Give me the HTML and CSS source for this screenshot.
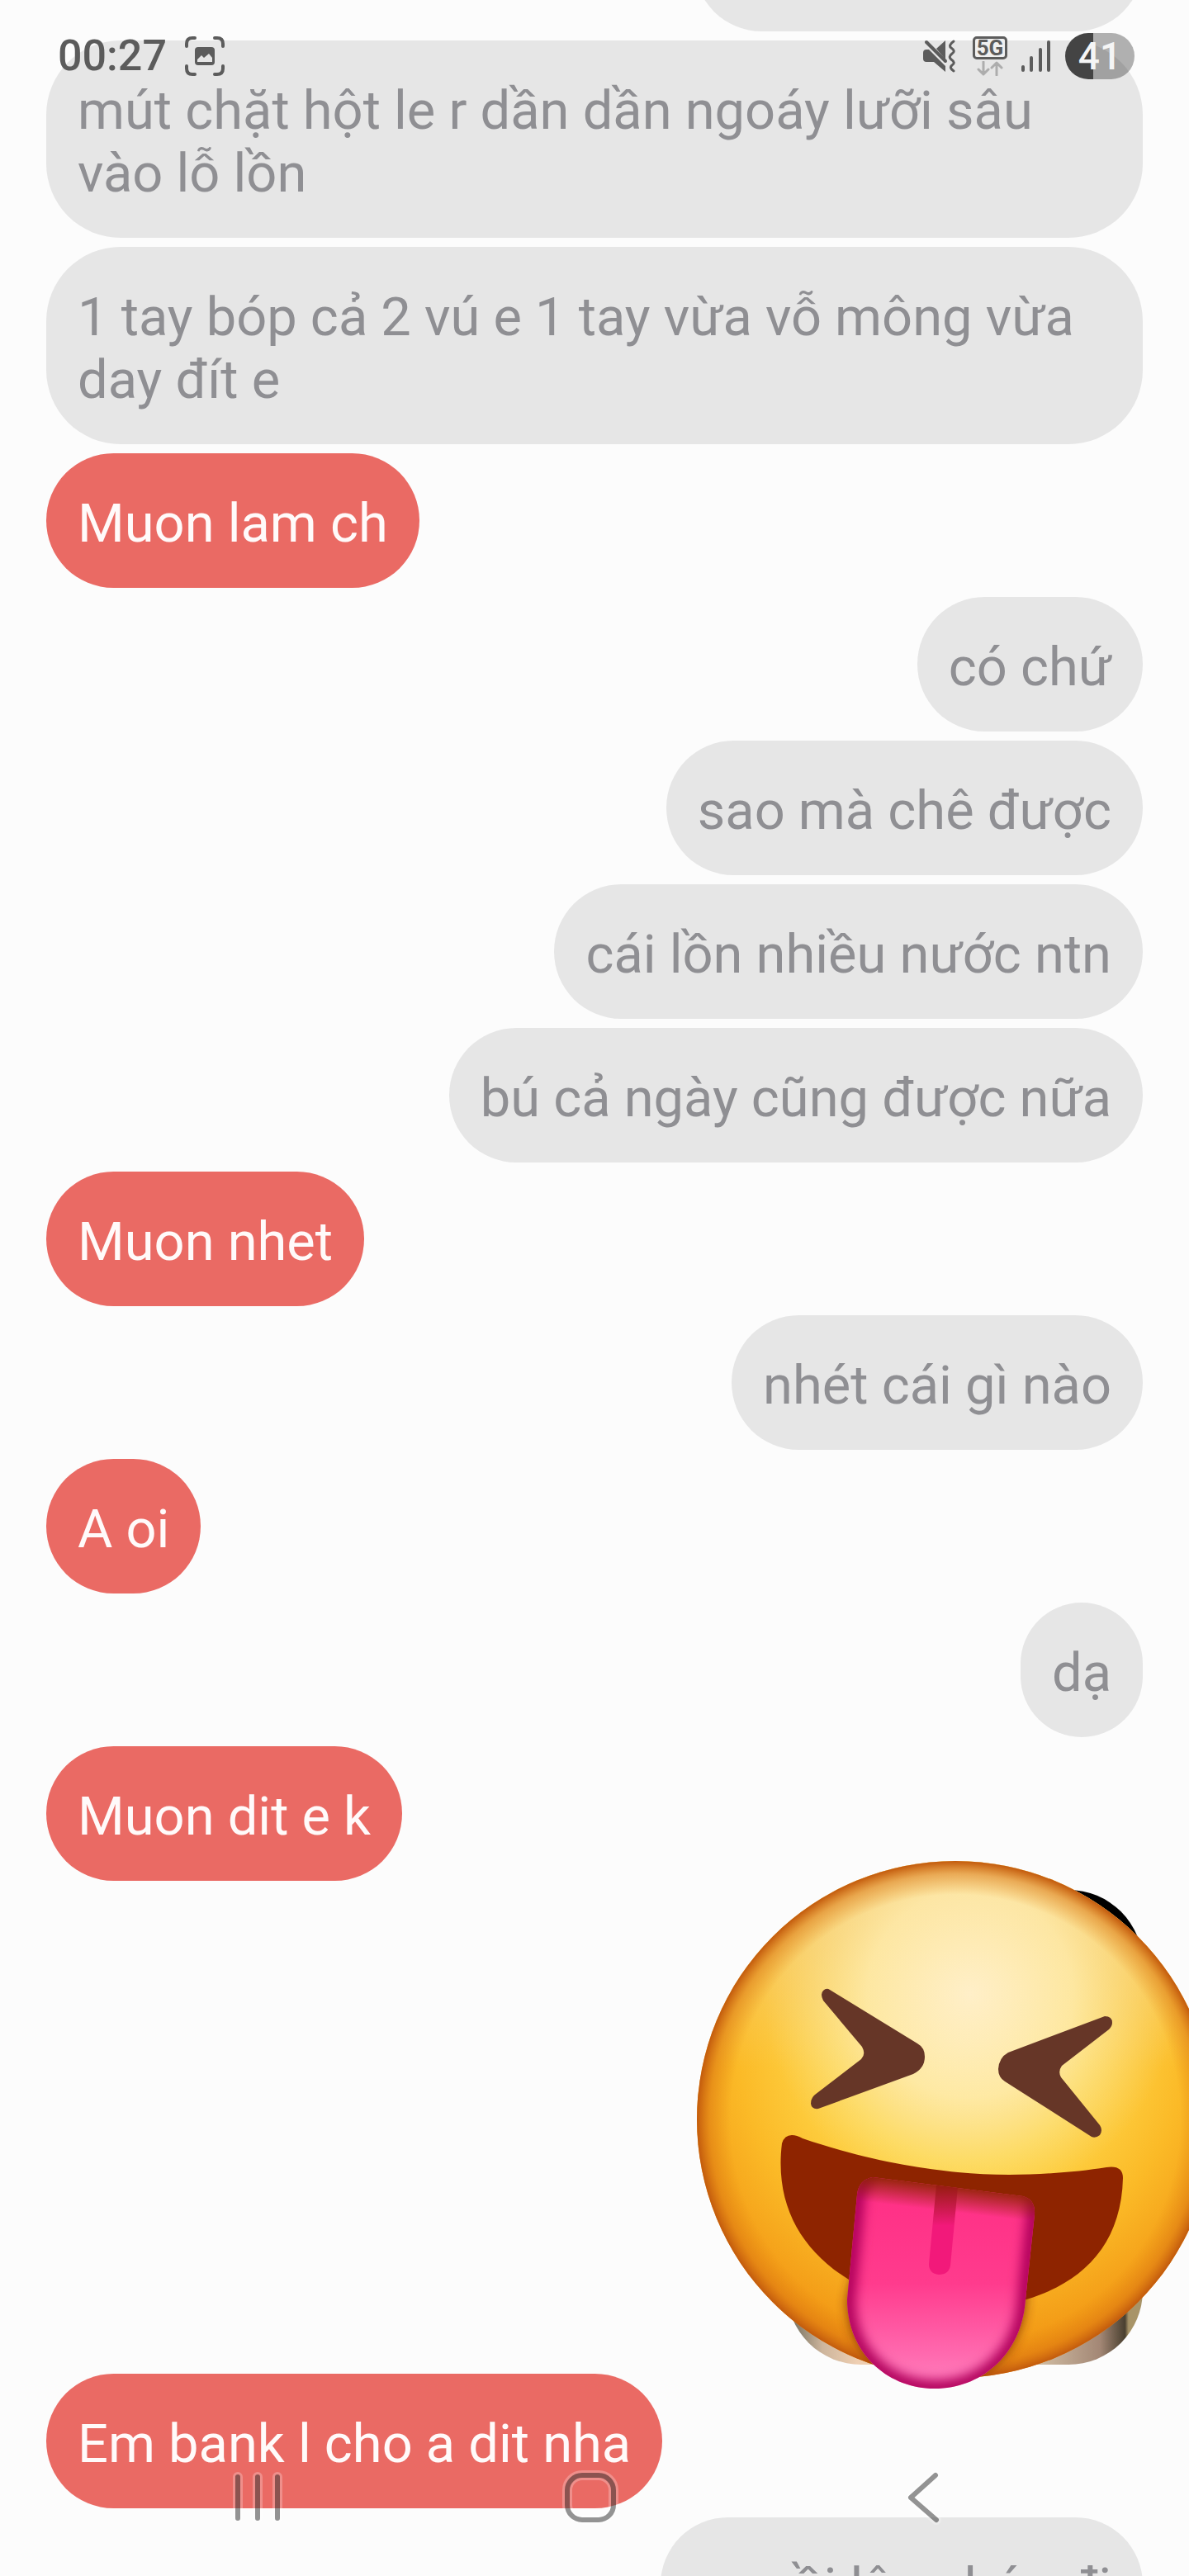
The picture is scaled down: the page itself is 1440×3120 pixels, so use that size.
FILE: index.html
```
<!DOCTYPE html>
<html lang="vi">
<head>
    <meta charset="UTF-8">
    <meta name="viewport" content="width=device-width, initial-scale=1.0">
    <title>Chat</title>
    <link rel="stylesheet" href="styles.css">
</head>
<body>
    <div class="screen">
        <header class="status-bar">
            <span class="clock">00:27</span>
            <svg class="capture-icon" width="48" height="48" viewBox="0 0 48 48" fill="none" stroke="#5c5c5c" stroke-width="4" stroke-linecap="round">
                <path d="M2 12V9Q2 2 9 2H12M36 2H39Q46 2 46 9V12M46 36V39Q46 46 39 46H36M12 46H9Q2 46 2 39V36"/>
                <rect x="12" y="13" width="24" height="22" rx="4" fill="#5c5c5c" stroke="none"/>
                <path d="M15 31V28L20 23L23 26L29 21L33 26V31Z" fill="#e6e6e6" stroke="none"/>
            </svg>
            <div class="status-icons">
                <svg width="40" height="40" viewBox="0 0 40 40" fill="#5c5c5c">
                    <path d="M4 12H7L27 32V39L13 27H4Q0 27 0 23V16Q0 12 4 12Z"/>
                    <path d="M27 1V24L16 11Z"/>
                    <path d="M4 3L27 26" fill="none" stroke="#5c5c5c" stroke-width="4" stroke-linecap="round"/>
                    <path d="M37 2Q30 7 34 10Q40 14 35 17Q30 21 34 24Q40 28 35 31Q31 34 37 38" fill="none" stroke="#5c5c5c" stroke-width="3" stroke-linecap="round"/>
                </svg>
                <div class="network">
                    <span class="network-type">5G</span>
                    <svg width="32" height="18" viewBox="0 0 32 18" fill="none" stroke="#adadad" stroke-width="3" stroke-linecap="round" stroke-linejoin="round">
                        <path d="M8 1V16M2 10L8 16L14 10M24 17V2M18 8L24 2L30 8"/>
                    </svg>
                </div>
                <svg width="38" height="40" viewBox="0 0 38 40" stroke="#5c5c5c" stroke-width="4" stroke-linecap="round">
                    <path d="M3 33V37M13 22V37M24 12V37M34 3V37"/>
                </svg>
                <span class="battery">41</span>
            </div>
        </header>

        <main class="chat">
            <div class="message sent previous"></div>
            <div class="message sent">mút chặt hột le r dần dần ngoáy lưỡi sâu vào lỗ lồn</div>
            <div class="message sent">1 tay bóp cả 2 vú e 1 tay vừa vỗ mông vừa day đít e</div>
            <div class="message received">Muon lam ch</div>
            <div class="message sent">có chứ</div>
            <div class="message sent">sao mà chê được</div>
            <div class="message sent">cái lồn nhiều nước ntn</div>
            <div class="message sent">bú cả ngày cũng được nữa</div>
            <div class="message received">Muon nhet</div>
            <div class="message sent">nhét cái gì nào</div>
            <div class="message received">A oi</div>
            <div class="message sent">dạ</div>
            <div class="message received">Muon dit e k</div>
            <div class="photo">
                <svg class="sticker" width="620" height="700" viewBox="0 0 620 700">
                    <defs>
                        <radialGradient id="skin" gradientUnits="userSpaceOnUse" cx="345" cy="250" r="390">
                            <stop offset="0" stop-color="#ffe994"/>
                            <stop offset=".38" stop-color="#ffda4e"/>
                            <stop offset=".7" stop-color="#fbba27"/>
                            <stop offset="1" stop-color="#f19312"/>
                        </radialGradient>
                        <radialGradient id="shine" gradientUnits="userSpaceOnUse" cx="355" cy="195" r="250">
                            <stop offset="0" stop-color="#ffefc8"/>
                            <stop offset=".5" stop-color="#feebb0" stop-opacity=".8"/>
                            <stop offset="1" stop-color="#f6d78c" stop-opacity="0"/>
                        </radialGradient>
                        <linearGradient id="brow" x1="0" y1="0" x2="0" y2="1">
                            <stop offset="0" stop-color="#f3d08a" stop-opacity=".9"/>
                            <stop offset=".4" stop-color="#f8d680" stop-opacity="0"/>
                        </linearGradient>
                        <radialGradient id="rim" gradientUnits="userSpaceOnUse" cx="337" cy="347" r="313">
                            <stop offset=".87" stop-color="#e08010" stop-opacity="0"/>
                            <stop offset=".95" stop-color="#d97512" stop-opacity=".5"/>
                            <stop offset="1" stop-color="#c25a0d"/>
                        </radialGradient>
                        <linearGradient id="tongue" x1="0" y1="0" x2="0" y2="1">
                            <stop offset="0" stop-color="#ff2d84"/>
                            <stop offset=".5" stop-color="#ff3b8d"/>
                            <stop offset=".9" stop-color="#ff75b7"/>
                        </linearGradient>
                        <linearGradient id="lip" gradientUnits="userSpaceOnUse" x1="328" y1="424" x2="324" y2="458">
                            <stop offset="0" stop-color="#8e2400"/>
                            <stop offset="1" stop-color="#8e2400" stop-opacity="0"/>
                        </linearGradient>
                        <linearGradient id="groove" x1="0" y1="0" x2="0" y2="1">
                            <stop offset="0" stop-color="#961c10"/>
                            <stop offset=".45" stop-color="#f2197a"/>
                        </linearGradient>
                        <filter id="blur" x="-20%" y="-20%" width="140%" height="140%">
                            <feGaussianBlur stdDeviation="7"/>
                        </filter>
                        <clipPath id="face-clip"><circle cx="337" cy="347" r="313"/></clipPath>
                        <clipPath id="tongue-clip"><path d="M237 417Q220 420 218 438L206 565C206 630 255 673 312 673C370 673 418 630 422 565L433 462Q434 444 419 440Z"/></clipPath>
                    </defs>
                    <circle cx="337" cy="347" r="313" fill="url(#skin)"/>
                    <circle cx="337" cy="347" r="313" fill="url(#brow)"/>
                    <circle cx="337" cy="347" r="313" fill="url(#shine)"/>
                    <circle cx="337" cy="347" r="313" fill="url(#rim)"/>
                    <!-- eyes -->
                    <path fill="#663627" d="M185 190L291 255Q300 260 300 271Q300 285 286 292L171 334Q163 335 162 328Q162 321 167 317L223 274Q229 268 224 259L177 203Q173 195 177 191Q181 187 185 190Z"/>
                    <path fill="#663627" d="M518 222Q527 222 527 230Q527 234 523 238L466 282Q461 289 465 296L512 354Q516 360 512 366Q507 370 502 368L397 301Q389 296 389 286Q390 272 401 266Z"/>
                    <!-- tongue shadow, mouth, tongue -->
                    <g clip-path="url(#face-clip)">
                        <path fill="#7a2a00" opacity=".9" filter="url(#blur)" d="M237 440L206 565C206 630 255 670 312 670C370 670 418 630 422 565L428 462Z"/>
                    </g>
                    <path fill="#8e2400" d="M127 376Q130 366 139 366Q145 366 152 370C225 395 290 406 340 411C400 417 470 413 520 405Q540 402 540 418C538 500 490 545 423 565L208 541C150 505 118 450 127 376Z"/>
                    <g clip-path="url(#tongue-clip)">
                        <rect x="200" y="410" width="240" height="270" fill="url(#tongue)"/>
                        <path fill="none" stroke="#b0005c" stroke-width="20" filter="url(#blur)" d="M237 400L218 438L206 565C206 630 255 673 312 673C370 673 418 630 422 565L433 462V420"/>
                        <rect x="200" y="400" width="240" height="120" fill="url(#lip)"/>
                        <path fill="url(#groove)" d="M314 427L340 429L331 524Q329 535 317 535Q305 534 305 522Z"/>
                    </g>
                </svg>
            </div>
            <div class="message received">Em bank l cho a dit nha</div>
            <div class="message sent">e ngồi lên nhún đi</div>
        </main>

        <nav class="nav-bar">
            <button type="button" aria-label="Recent apps">
                <svg width="70" height="70" viewBox="0 0 70 70" fill="none" stroke-linecap="round">
                    <path class="halo" d="M11 10V60M35 10V60M59 10V60"/>
                    <path class="line" d="M11 10V60M35 10V60M59 10V60"/>
                </svg>
            </button>
            <button type="button" aria-label="Home">
                <svg width="70" height="70" viewBox="0 0 70 70" fill="none">
                    <rect class="halo" x="7" y="8" width="56" height="54" rx="18"/>
                    <rect class="line" x="7" y="8" width="56" height="54" rx="18"/>
                </svg>
            </button>
            <button type="button" aria-label="Back">
                <svg width="70" height="70" viewBox="0 0 70 70" fill="none" stroke-linecap="round" stroke-linejoin="round">
                    <path class="halo" d="M50 8L20 35L51 62"/>
                    <path class="line" d="M50 8L20 35L51 62"/>
                </svg>
            </button>
        </nav>
    </div>
</body>
</html>
```
FILE: styles.css
```
body {
    margin: 0;
    background-color: #fcfcfc;
    font-family: Roboto, 'Noto Sans', sans-serif;
}
.screen {
    position: relative;
    height: 100vh;
    overflow: hidden;
}
.status-bar {
    position: absolute;
    top: 40px;
    left: 0;
    right: 0;
    z-index: 2;
    display: flex;
    align-items: center;
    height: 56px;
    padding: 0 66px 0 70px;
    color: #5c5c5c;
}
.clock {
    font-size: 52px;
    line-height: 56px;
    font-weight: 500;
}
.capture-icon {
    margin-left: 22px;
}
.status-icons {
    display: flex;
    align-items: center;
    gap: 16px;
    margin-left: auto;
}
.network {
    display: flex;
    flex-direction: column;
    align-items: center;
    gap: 2px;
    margin-left: 4px;
}
.network-type {
    box-sizing: border-box;
    width: 42px;
    height: 28px;
    border: 3px solid #5c5c5c;
    border-radius: 5px;
    background-color: #f0f0f0;
    font-size: 26px;
    line-height: 23px;
    font-weight: 700;
    text-align: center;
}
.battery {
    width: 84px;
    border-radius: 28px;
    background: linear-gradient(to right, #444 40%, rgba(0, 0, 0, 0.3) 40%);
    color: #f5f5f5;
    font-size: 46px;
    line-height: 56px;
    font-weight: 500;
    text-align: center;
}
.chat {
    display: flex;
    flex-direction: column;
    align-items: flex-start;
    gap: 11px;
    padding: 0 56px;
}
.message {
    padding: 47px 38px 40px;
    border-radius: 90px;
    font-size: 65px;
    line-height: 76px;
}
.sent {
    align-self: flex-end;
    background-color: #e6e6e6;
    color: #8f8f93;
}
.received {
    background-color: #ea6a64;
    color: #fffafa;
}
/* scrolled mostly out of view */
.previous {
    box-sizing: border-box;
    width: 543px;
    height: 163px;
    margin-top: -125px;
}
.photo {
    position: relative;
    align-self: flex-end;
    width: 431px;
    height: 575px;
    border-radius: 90px;
    background:
        linear-gradient(to bottom, #000 30%, transparent 60%),
        linear-gradient(to right, #7d7766 2%, #cdb59c 10%, #efcfb2 20%, #cdb9a0 72%, #a38775 88%, #4a4030 95%, #a89468 96%);
}
.sticker {
    position: absolute;
    top: -69px;
    right: -56px;
}
.nav-bar {
    position: absolute;
    bottom: 0;
    left: 0;
    right: 0;
    z-index: 2;
    display: flex;
    height: 190px;
    padding: 0 120px 0 110px;
}
.nav-bar button {
    flex: 1;
    padding: 0;
    border: none;
    background: none;
    cursor: pointer;
}
.nav-bar svg {
    display: block;
    margin: 0 auto;
}
.halo {
    stroke: rgba(255, 255, 255, 0.25);
    stroke-width: 12;
}
.line {
    stroke: rgba(0, 0, 0, 0.42);
    stroke-width: 6;
}
```
